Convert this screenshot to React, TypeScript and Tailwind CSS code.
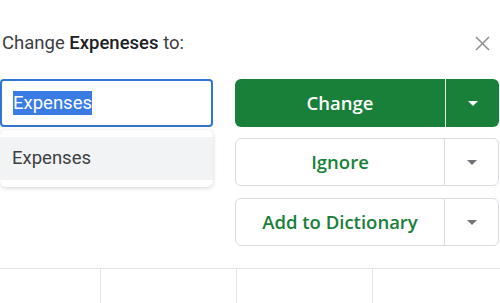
import React from 'react';

const Caret: React.FC<{ color: string }> = ({ color }) => (
  <svg width="10" height="5" viewBox="0 0 10 5">
    <path d="M0 0 L10 0 L5 5 Z" fill={color} />
  </svg>
);

const SplitButton: React.FC<{ label: string; primary?: boolean; className?: string }> = ({ label, primary, className }) => (
  <div
    className={`flex h-[48px] rounded-[6px] ${
      primary ? 'bg-[#188038] text-white' : 'border border-[#dadce0] bg-white text-[#188038]'
    } ${className ?? ''}`}
    style={{ fontFamily: '"Open Sans", Roboto, sans-serif' }}
  >
    <div className="flex flex-1 items-center justify-center text-[18.5px] font-semibold">{label}</div>
    <div className={`flex w-[54px] items-center justify-center border-l ${primary ? 'border-[#e8f0e9]' : 'border-[#dadce0]'}`}>
      <Caret color={primary ? '#ffffff' : '#6f7276'} />
    </div>
  </div>
);

export default function App() {
  return (
    <div className="relative h-[303px] w-[500px] overflow-hidden bg-white" style={{ fontFamily: 'Roboto, "Liberation Sans", sans-serif' }}>
      <div className="flex h-[79px] items-start justify-between pl-[2px] pr-[10px] pt-[30px]">
        <div className="text-[18.5px] text-[#3c4043]">
          Change <span className="font-medium text-[#202124]">Expeneses</span> to:
        </div>
        <svg width="15" height="15" viewBox="0 0 15 15" className="mt-[6px]">
          <path d="M1 1 L14 14 M14 1 L1 14" stroke="#8a8d91" strokeWidth="1.5" />
        </svg>
      </div>

      <div className="flex gap-[22px] pr-[1px]">
        <div className="w-[213px]">
          <div className="flex h-[48px] items-center rounded-[4px] border-2 border-[#2f74d6] pl-[11px]">
            <span className="bg-[#3b7ce4] text-[18.5px] leading-[24px] text-white">Expenses</span>
          </div>
          <div className="mt-[3px] rounded-[6px] bg-white py-[7px] shadow-[0_1px_4px_rgba(0,0,0,0.18)]">
            <div className="flex h-[43px] items-center bg-[#f1f3f4] pl-[12px] text-[18.5px] text-[#3c4043]">Expenses</div>
          </div>
        </div>

        <div className="flex flex-1 flex-col">
          <SplitButton label="Change" primary />
          <SplitButton label="Ignore" className="mt-[11px] h-[47px]" />
          <SplitButton label="Add to Dictionary" className="mt-[12px]" />
        </div>
      </div>

      <div className="absolute left-0 top-[268px] flex w-[500px] border-t border-[#e3e3e3]">
        <div className="h-[40px] w-[100px]" />
        <div className="h-[40px] w-[136px] border-l border-[#e3e3e3]" />
        <div className="h-[40px] w-[136px] border-l border-[#e3e3e3]" />
        <div className="h-[40px] w-[128px] border-l border-[#e3e3e3]" />
      </div>
    </div>
  );
}
